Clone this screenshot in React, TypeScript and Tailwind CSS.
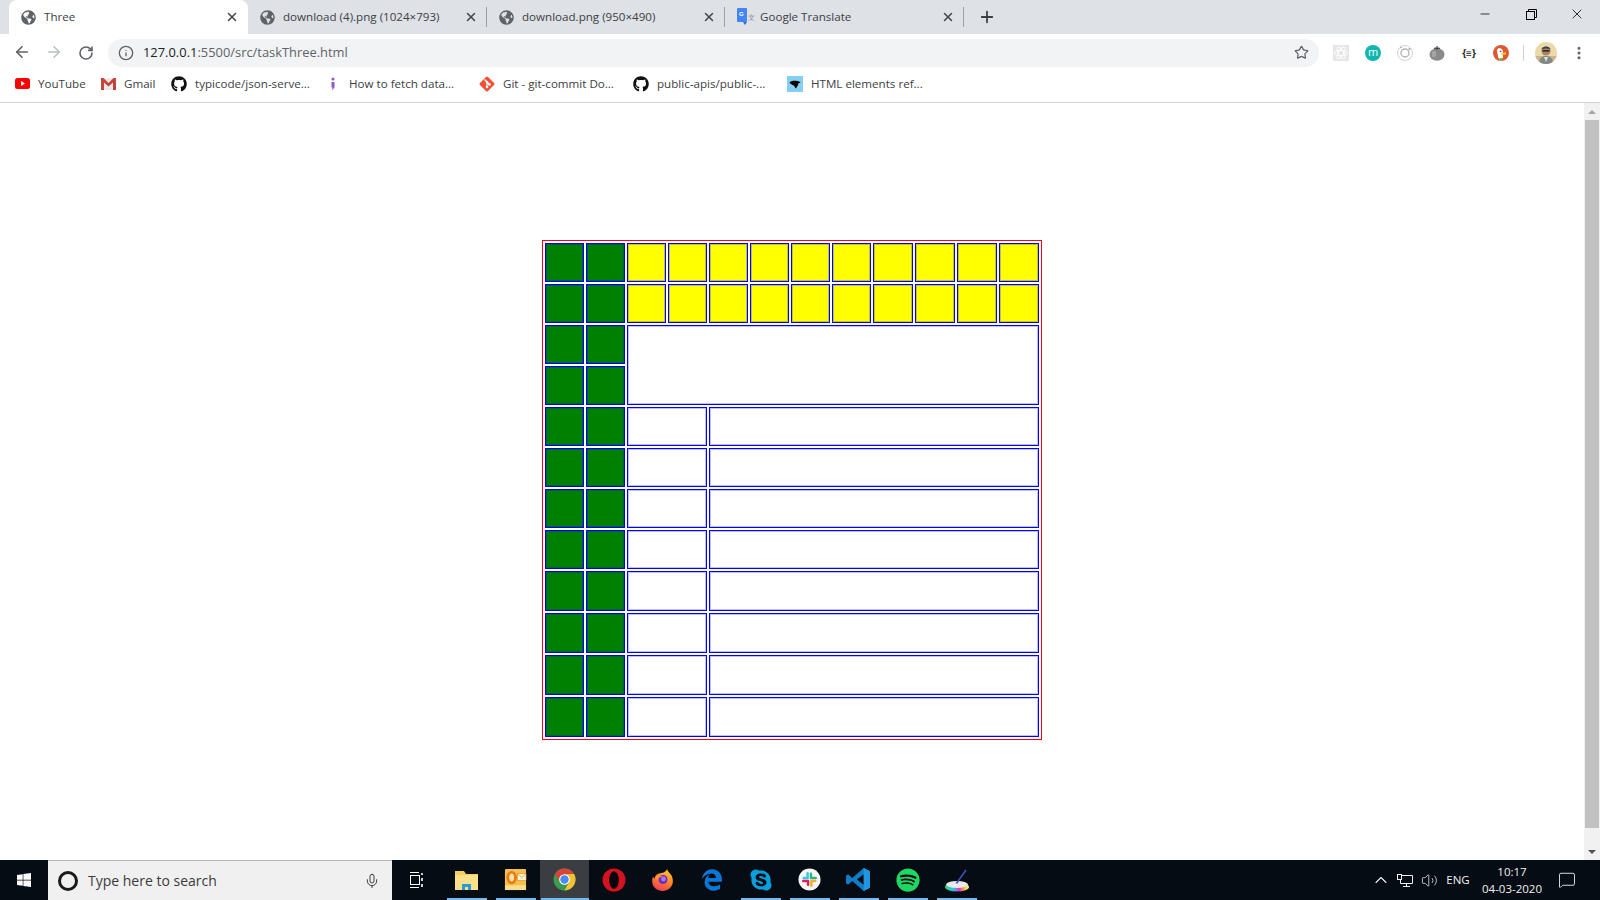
import React from 'react';
import { ArrowLeft, ArrowRight, RotateCw, Info, Star, X, Plus, Minus, MoreVertical, ChevronUp, Mic, Volume2, MessageSquare } from 'lucide-react';
import { FaGlobeAmericas, FaGithub, FaWindows, FaEdgeLegacy, FaSkype, FaSpotify } from 'react-icons/fa';

const rows = Array.from({ length: 12 }, (_, i) => i);
const yellowCells = Array.from({ length: 10 }, (_, i) => i);
// the reference lines are slightly soft, the faint inner ring gives them the same weight
const cell = 'border border-[#0000ff] p-0 shadow-[inset_0_0_0_1px_rgba(0,0,255,0.25)]';

function TaskTable() {
  return (
    <table className="w-[500px] border border-[#ff0000] border-separate border-spacing-[2px] table-fixed">
      <colgroup>
        {rows.map((c) => (
          <col key={c} className={c < 8 ? 'w-[39px]' : 'w-[40px]'} />
        ))}
      </colgroup>
      <tbody>
        {rows.map((row) => (
          <tr key={row} className={row < 8 ? 'h-[39px]' : 'h-[40px]'}>
            <td className={`${cell} bg-[#008000]`}></td>
            <td className={`${cell} bg-[#008000]`}></td>
            {row < 2 && yellowCells.map((c) => <td key={c} className={`${cell} bg-[#ffff00]`}></td>)}
            {row === 2 && <td colSpan={10} rowSpan={2} className={cell}></td>}
            {row > 3 && <td colSpan={2} className={cell}></td>}
            {row > 3 && <td colSpan={8} className={cell}></td>}
          </tr>
        ))}
      </tbody>
    </table>
  );
}

function TranslateIcon() {
  return (
    <svg width="18" height="18" viewBox="0 0 18 18" className="ml-[3px]">
      <rect x="6" y="3" width="11" height="11" fill="#dfe1e5" />
      <text x="11" y="12" fontSize="7" fill="#80868b" fontFamily="Liberation Sans">文</text>
      <rect x="0" y="0" width="10" height="14" rx="1" fill="#4285f4" />
      <path d="M6 14h4l-2 3z" fill="#3367d6" />
      <text x="2" y="8" fontSize="6" fontWeight="700" fill="#fff" fontFamily="Liberation Sans">G</text>
    </svg>
  );
}

function Tab({ title, icon, width, active, sep }: { title: string; icon: React.ReactNode; width: string; active?: boolean; sep?: boolean }) {
  return (
    <div className={`flex items-center h-[34px] ${width} ${active ? 'bg-white rounded-t-lg' : ''}`}>
      <div className="w-[38px] flex justify-center shrink-0">{icon}</div>
      <span className="flex-1 text-[11.6px] text-[#3c4043] whitespace-nowrap -ml-[3px]">{title}</span>
      <X size={14} strokeWidth={2.6} className={`text-[#45484c] shrink-0 ${sep ? 'mr-[8px]' : 'mr-[9px]'}`} />
      {sep && <div className="w-px h-5 bg-[#9aa0a6] shrink-0" />}
    </div>
  );
}

function TabStrip() {
  const globe = <FaGlobeAmericas size={15} className="text-[#5f6368]" />;
  return (
    <div className="flex items-start h-[34px] bg-[#dee1e6] pl-[9px] shrink-0">
      <Tab title="Three" icon={globe} width="w-[239px]" active />
      <Tab title="download (4).png (1024×793)" icon={globe} width="w-[239px]" sep />
      <Tab title="download.png (950×490)" icon={globe} width="w-[238px]" sep />
      <Tab title="Google Translate" icon={<TranslateIcon />} width="w-[239px]" sep />
      <div className="w-[46px] h-[34px] flex items-center justify-center">
        <Plus size={18} strokeWidth={2.4} className="text-[#3c4043]" />
      </div>
      <div className="flex-1" />
      <div className="flex items-center h-7 text-black">
        <div className="w-[46px] flex justify-center"><Minus size={14} strokeWidth={1.3} /></div>
        <div className="w-[46px] flex justify-center">
          <svg width="11" height="11" viewBox="0 0 11 11" fill="none" stroke="#000"><rect x="0.5" y="2.5" width="8" height="8" /><path d="M2.5 2.5v-2h8v8h-2" /></svg>
        </div>
        <div className="w-[46px] flex justify-center"><X size={16} strokeWidth={1.2} /></div>
      </div>
    </div>
  );
}

function Extensions() {
  return (
    <div className="flex items-center h-full">
      <div className="w-8 flex justify-center">
        <svg width="16" height="16" viewBox="0 0 16 16">
          <rect width="16" height="16" fill="#e6e6e6" />
          <g fill="none" stroke="#fff" strokeWidth="0.9">
            <ellipse cx="8" cy="8" rx="6.5" ry="2.6" />
            <ellipse cx="8" cy="8" rx="6.5" ry="2.6" transform="rotate(60 8 8)" />
            <ellipse cx="8" cy="8" rx="6.5" ry="2.6" transform="rotate(120 8 8)" />
          </g>
        </svg>
      </div>
      <div className="w-8 flex justify-center">
        <div className="w-4 h-4 rounded-full bg-[#10b5b0] flex items-center justify-center text-white text-[11px] leading-none pb-[2px]">m</div>
      </div>
      <div className="w-8 flex justify-center">
        <svg width="16" height="16" viewBox="0 0 16 16" fill="none">
          <circle cx="8" cy="8" r="7.5" stroke="#d2d2d2" />
          <circle cx="8" cy="8" r="4" stroke="#b5b5b5" strokeWidth="1.4" />
          <circle cx="12.5" cy="4" r="1" fill="#a0a0a0" />
          <circle cx="4" cy="2.5" r="0.8" fill="#a0a0a0" />
        </svg>
      </div>
      <div className="w-8 flex justify-center">
        <svg width="16" height="16" viewBox="0 0 16 16">
          <ellipse cx="8" cy="9.5" rx="7.5" ry="6.2" fill="#8a8a8a" />
          <path d="M8 4C7 3 6 3 5 3.5M8 4l0-3M8 4c1-1 2-1 3-.5" stroke="#3f3f3f" strokeWidth="1.1" fill="none" />
          <ellipse cx="5" cy="9" rx="2.2" ry="3.2" fill="#a5a5a5" />
        </svg>
      </div>
      <div className="w-8 flex justify-center text-[10px] font-bold text-[#222] leading-none">{'{≡}'}</div>
      <div className="w-8 flex justify-center">
        <svg width="16" height="16" viewBox="0 0 16 16">
          <circle cx="8" cy="8" r="8" fill="#de5833" />
          <path d="M5 3.5c2.5-1 5 .5 5 3.5v5.5l-2 3c-3-1-3-5-3.5-7S3.5 4.5 5 3.5z" fill="#fff" />
          <circle cx="7.5" cy="6.5" r="0.8" fill="#2d4f8e" />
          <path d="M8.5 8.3l4.5-1v2l-4.5.6z" fill="#fdd20a" />
          <path d="M6 13.5l3-.8.5 2.3-2.5.6z" fill="#65bc46" />
        </svg>
      </div>
    </div>
  );
}

function Avatar() {
  return (
    <svg width="22" height="22" viewBox="0 0 22 22" className="shrink-0">
      <defs>
        <clipPath id="avatar-clip"><circle cx="11" cy="11" r="11" /></clipPath>
      </defs>
      <g clipPath="url(#avatar-clip)">
        <rect width="22" height="22" fill="#ecd9a8" />
        <rect x="0" y="14" width="22" height="8" fill="#c9b48e" />
        <path d="M4 22c0-6 3-8 7-8s7 2 7 8z" fill="#7f8a88" />
        <path d="M9 15l2 5 2-5z" fill="#e8e2d0" />
        <circle cx="11" cy="9" r="4.5" fill="#a9825f" />
        <path d="M6.5 7.5C7 3.5 15 3.5 15.5 7.5 13 6 9 6 6.5 7.5z" fill="#2f4455" />
        <rect x="7.5" y="8" width="7" height="1.6" fill="#2b2b2b" />
      </g>
    </svg>
  );
}

function Toolbar() {
  return (
    <div className="flex items-center h-[36px] bg-white pl-[6px] pt-[1px] shrink-0">
      <div className="w-8 flex justify-center"><ArrowLeft size={18} strokeWidth={2.2} className="text-[#5f6368] -mt-[1px]" /></div>
      <div className="w-8 flex justify-center"><ArrowRight size={18} strokeWidth={2.2} className="text-[#bcc0c4] -mt-[1px]" /></div>
      <div className="w-8 flex justify-center"><RotateCw size={16} strokeWidth={2.4} className="text-[#5f6368]" /></div>
      <div className="flex items-center ml-[6px] w-[1211px] h-[28px] rounded-full bg-[#f1f3f4] pl-[10px] pr-[10px]">
        <Info size={16} strokeWidth={2} className="text-[#5f6368] shrink-0" />
        <span className="ml-[9px] text-[12.9px] text-[#5f6368] whitespace-nowrap"><span className="text-[#202124]">127.0.0.1</span>:5500/src/taskThree.html</span>
        <div className="flex-1" />
        <Star size={15} strokeWidth={2} className="text-[#5f6368]" />
      </div>
      <div className="ml-[6px]"><Extensions /></div>
      <div className="w-px h-[16px] bg-[#d0d2d5] ml-[6px] mr-[11px]" />
      <Avatar />
      <div className="w-[43px] flex justify-center"><MoreVertical size={16} strokeWidth={2.6} className="text-[#5f6368]" /></div>
    </div>
  );
}

function Bookmark({ label, icon, width }: { label: string; icon: React.ReactNode; width: string }) {
  return (
    <div className={`flex items-center ${width} shrink-0`}>
      <div className="w-4 h-4 flex items-center justify-center shrink-0">{icon}</div>
      <span className="ml-2 text-[11.6px] text-[#3c4043] whitespace-nowrap">{label}</span>
    </div>
  );
}

function BookmarksBar() {
  return (
    <div className="flex items-center h-[33px] pb-[4px] pl-[14px] bg-white border-b border-[#d3d3d3] shrink-0">
      <Bookmark width="w-[86px]" label="YouTube" icon={
        <svg width="15" height="11" viewBox="0 0 15 11"><rect width="15" height="11" rx="2.5" fill="#f00" /><path d="M6 3l4 2.5L6 8z" fill="#fff" /></svg>
      } />
      <Bookmark width="w-[71px]" label="Gmail" icon={
        <svg width="15" height="12" viewBox="0 0 15 12"><rect width="15" height="12" fill="#e8e8e8" /><path d="M0 0h2.5L7.5 5 12.5 0H15v12h-3V4.5L7.5 8.5 3 4.5V12H0z" fill="#c5443a" /></svg>
      } />
      <Bookmark width="w-[154px]" label="typicode/json-serve..." icon={<FaGithub size={16} className="text-[#111]" />} />
      <Bookmark width="w-[154px]" label="How to fetch data..." icon={
        <svg width="6" height="14" viewBox="0 0 6 14"><circle cx="3" cy="2" r="1.6" fill="#8b5cc9" /><path d="M1.5 5h3v5.5L2 13.5l.5-3h-1z" fill="#8b5cc9" /></svg>
      } />
      <Bookmark width="w-[154px]" label="Git - git-commit Do..." icon={
        <svg width="16" height="16" viewBox="0 0 16 16">
          <rect x="2.3" y="2.3" width="11.4" height="11.4" rx="1.5" transform="rotate(45 8 8)" fill="#f05133" />
          <path d="M5.5 3.5L10.5 8.5M8 6v5.5" stroke="#fff" strokeWidth="1.2" />
          <circle cx="8" cy="6" r="1.3" fill="#fff" />
          <circle cx="10.5" cy="8.5" r="1.3" fill="#fff" />
          <circle cx="8" cy="11" r="1.3" fill="#fff" />
        </svg>
      } />
      <Bookmark width="w-[154px]" label="public-apis/public-..." icon={<FaGithub size={16} className="text-[#111]" />} />
      <Bookmark width="w-[140px]" label="HTML elements ref..." icon={
        <svg width="16" height="16" viewBox="0 0 16 16"><rect width="16" height="16" fill="#83d0f2" /><path d="M2.5 6.5C4 4.5 9 4 13.5 6c-.5 1-1.200 1-2 1.300C11 9.500 10 11.500 8.500 12.500 8 11 7.500 10 6.500 9.200 5 9 3.500 8 2.500 6.500z" fill="#000" /></svg>
      } />
    </div>
  );
}

function Scrollbar() {
  return (
    <div className="flex flex-col items-center w-4 bg-[#f1f1f1] shrink-0">
      <div className="h-[17px] flex items-center justify-center">
        <div className="w-0 h-0 border-x-[4px] border-x-transparent border-b-[4px] border-b-[#a3a3a3]" />
      </div>
      <div className="w-[14px] h-[708px] bg-[#c1c1c1]" />
      <div className="flex-1" />
      <div className="h-[17px] flex items-center justify-center">
        <div className="w-0 h-0 border-x-[4px] border-x-transparent border-t-[4px] border-t-[#505050]" />
      </div>
    </div>
  );
}

function ChromeLogo() {
  return (
    <svg width="23" height="23" viewBox="0 0 24 24">
      <circle cx="12" cy="12" r="11.5" fill="#3d9a4b" />
      <path d="M2 6.3A11.5 11.5 0 0 1 22 6.3L12 6.5l-4.7 8.200z" fill="#d8443a" />
      <path d="M22 6.3A11.5 11.5 0 0 1 12 23.500L16.800 14.800 12 6.500z" fill="#f6c231" />
      <circle cx="12" cy="12" r="5.6" fill="#fff" />
      <circle cx="12" cy="12" r="4.4" fill="#4a8af4" />
    </svg>
  );
}

function OutlookLogo() {
  return (
    <svg width="23" height="23" viewBox="0 0 24 24">
      <rect x="1" y="1" width="22" height="22" rx="1" fill="#f5c04a" />
      <rect x="1" y="18" width="22" height="5" fill="#f9dd8f" />
      <ellipse cx="8" cy="10" rx="5.5" ry="7" fill="#e87a17" />
      <ellipse cx="8" cy="10" rx="2.5" ry="4.2" fill="#fbe3a5" />
      <rect x="14" y="6" width="9" height="7" fill="#fdf3d5" stroke="#c98f2a" strokeWidth="0.6" />
      <path d="M14 6l4.5 4L23 6" fill="none" stroke="#c98f2a" strokeWidth="0.7" />
    </svg>
  );
}

function FirefoxLogo() {
  return (
    <svg width="24" height="24" viewBox="0 0 24 24">
      <defs>
        <linearGradient id="fox-fill" x1="0.7" y1="0" x2="0.3" y2="1">
          <stop offset="0" stopColor="#ffc72e" />
          <stop offset="0.55" stopColor="#ff7a2c" />
          <stop offset="1" stopColor="#ee3a5c" />
        </linearGradient>
      </defs>
      <path d="M16 1c.5 3 3 3.5 4.500 6.500 2.500 5 1.500 10-2 13-3.500 3-10 3.500-14 0C1 17.500.5 12.500 2 8.500c.3 1 .8 1.500 1.500 2C4 8 5.500 6 8 5.500 11 5 15 4.500 16 1z" fill="url(#fox-fill)" />
      <circle cx="12" cy="11.5" r="4.5" fill="#6b2fc0" />
      <circle cx="12.5" cy="11" r="2.4" fill="#b072e8" />
      <path d="M4 10c2-2 5-3 8-1.500-3 0-5 1.500-5.500 3.500z" fill="#ff9a2e" />
    </svg>
  );
}

function SlackLogo() {
  return (
    <svg width="23" height="23" viewBox="0 0 24 24">
      <circle cx="12" cy="12" r="11.5" fill="#f5f5f5" />
      <g strokeWidth="2.6" strokeLinecap="round">
        <path d="M10 5.5v5M10 10.5H6" stroke="#36c5f0" />
        <path d="M18.5 10.5h-5M13.5 10.5V6" stroke="#2eb67d" />
        <path d="M14 18.5v-5M14 13.5h4" stroke="#ecb22e" />
        <path d="M5.5 13.5h5M10.5 13.5v4" stroke="#e01e5a" />
      </g>
    </svg>
  );
}

function VsCodeLogo() {
  return (
    <svg width="25" height="25" viewBox="0 0 24 24">
      <path d="M17 1l6 3v16l-6 3L6 13.5 2 17l-2-1.5v-7L2 7l4 3.5z" fill="#0e7dc8" />
      <path d="M17 7l-6.5 5 6.5 5z" fill="#05070c" />
      <path d="M17 1l6 3v16l-6 3z" fill="#2196e0" />
    </svg>
  );
}

function PaintLogo() {
  return (
    <svg width="26" height="26" viewBox="0 0 26 26">
      <defs>
        <linearGradient id="palette-fill" x1="0" y1="0" x2="1" y2="0">
          <stop offset="0" stopColor="#36d66b" />
          <stop offset="0.35" stopColor="#28c6e6" />
          <stop offset="0.6" stopColor="#e633c9" />
          <stop offset="0.85" stopColor="#f8d22f" />
          <stop offset="1" stopColor="#f0f0f0" />
        </linearGradient>
      </defs>
      <ellipse cx="13" cy="20" rx="12" ry="4.5" fill="url(#palette-fill)" />
      <ellipse cx="13" cy="17.5" rx="11" ry="3.5" fill="#e8e8e8" />
      <path d="M12 17L22 3" stroke="#3a4ec0" strokeWidth="1.6" />
      <path d="M9 19l3-3 1.5 1.5-3 2z" fill="#f4f4f4" />
    </svg>
  );
}

const taskIcons: { key: string; node: React.ReactNode; running?: boolean; active?: boolean }[] = [
  { key: 'explorer', running: true, node: (
    <svg width="23" height="20" viewBox="0 0 23 20"><path d="M0 1h9l2 3h12v16H0z" fill="#f7cf5e" /><rect y="5" width="23" height="15" fill="#fbe08a" /><path d="M7 20v-6h9v6h-3v-3h-3v3z" fill="#2b9ad8" /></svg>
  ) },
  { key: 'outlook', running: true, node: <OutlookLogo /> },
  { key: 'chrome', active: true, node: <ChromeLogo /> },
  { key: 'opera', node: (
    <svg width="24" height="24" viewBox="0 0 24 24"><circle cx="12" cy="12" r="11.5" fill="#d3131f" /><ellipse cx="12" cy="12" rx="4.8" ry="8.7" fill="#05070c" /></svg>
  ) },
  { key: 'firefox', node: <FirefoxLogo /> },
  { key: 'edge', node: <FaEdgeLegacy size={22} className="text-[#0b78d7]" /> },
  { key: 'skype', running: true, node: <FaSkype size={24} className="text-[#0a9fdc]" /> },
  { key: 'slack', running: true, node: <SlackLogo /> },
  { key: 'vscode', running: true, node: <VsCodeLogo /> },
  { key: 'spotify', running: true, node: <FaSpotify size={24} className="text-[#1ed760]" /> },
  { key: 'paint', running: true, node: <PaintLogo /> },
];

function Taskbar() {
  return (
    <div className="flex items-stretch h-[40px] bg-[#050c14] text-white shrink-0">
      <div className="w-12 flex items-center justify-center"><FaWindows size={16} /></div>
      <div className="flex items-center w-[344px] bg-[#f0f0f0] border-t border-[#b8b8b8] pl-[10px] pr-[12px]">
        <div className="w-5 h-5 rounded-full border-[3px] border-[#1a1a1a] shrink-0" />
        <span className="ml-[10px] flex-1 text-[14px] text-[#3b3b3b] whitespace-nowrap">Type here to search</span>
        <Mic size={16} strokeWidth={1.4} className="text-[#333]" />
      </div>
      <div className="w-[50px] flex items-center justify-center">
        <svg width="16" height="16" viewBox="0 0 16 16" fill="none" stroke="#fff" strokeWidth="1"><path d="M1 .5h9M1 15.5h9" /><rect x="1.5" y="3.5" width="9" height="9" /><path d="M13 1v2M13 6v3M13 12v3" strokeWidth="1.6" /></svg>
      </div>
      {taskIcons.map((t) => (
        <div key={t.key} className={`w-[49px] flex flex-col items-center ${t.active ? 'bg-[#3a3d42]' : ''}`}>
          <div className="flex-1 flex items-center justify-center pt-[1px]">{t.node}</div>
          <div className={`h-[2px] ${t.active ? 'w-[48px] bg-[#76b9ed]' : t.running ? 'w-[40px] bg-[#76b9ed]' : ''}`} />
        </div>
      ))}
      <div className="flex-1" />
      <div className="flex items-center text-[#f0f0f0]">
        <div className="w-6 flex justify-center"><ChevronUp size={20} strokeWidth={1.3} /></div>
        <div className="w-6 flex justify-center">
          <svg width="16" height="15" viewBox="0 0 16 15" fill="none" stroke="#f0f0f0"><rect x="0.5" y="1.5" width="4" height="5" /><path d="M4.5 2.5h11v8h-12V6.5M9.5 10.5v3M6 13.5h7" /></svg>
        </div>
        <div className="w-6 flex justify-center"><Volume2 size={17} strokeWidth={1.1} /></div>
        <span className="w-[34px] text-center text-[11.5px]">ENG</span>
        <div className="w-[69px] pl-[5px] flex flex-col items-center text-[11.5px] leading-[17px]">
          <span>10:17</span>
          <span>04-03-2020</span>
        </div>
        <div className="w-[46px] flex justify-center"><MessageSquare size={18} strokeWidth={1.2} /></div>
        <div className="w-[10px]" />
      </div>
    </div>
  );
}

export default function App() {
  return (
    <div className="flex flex-col h-screen overflow-hidden bg-white font-['Open_Sans',sans-serif]">
      <TabStrip />
      <Toolbar />
      <BookmarksBar />
      <div className="flex flex-1 min-h-0">
        <main className="flex flex-1 justify-center items-start pt-[137px]">
          <TaskTable />
        </main>
        <Scrollbar />
      </div>
      <Taskbar />
    </div>
  );
}
